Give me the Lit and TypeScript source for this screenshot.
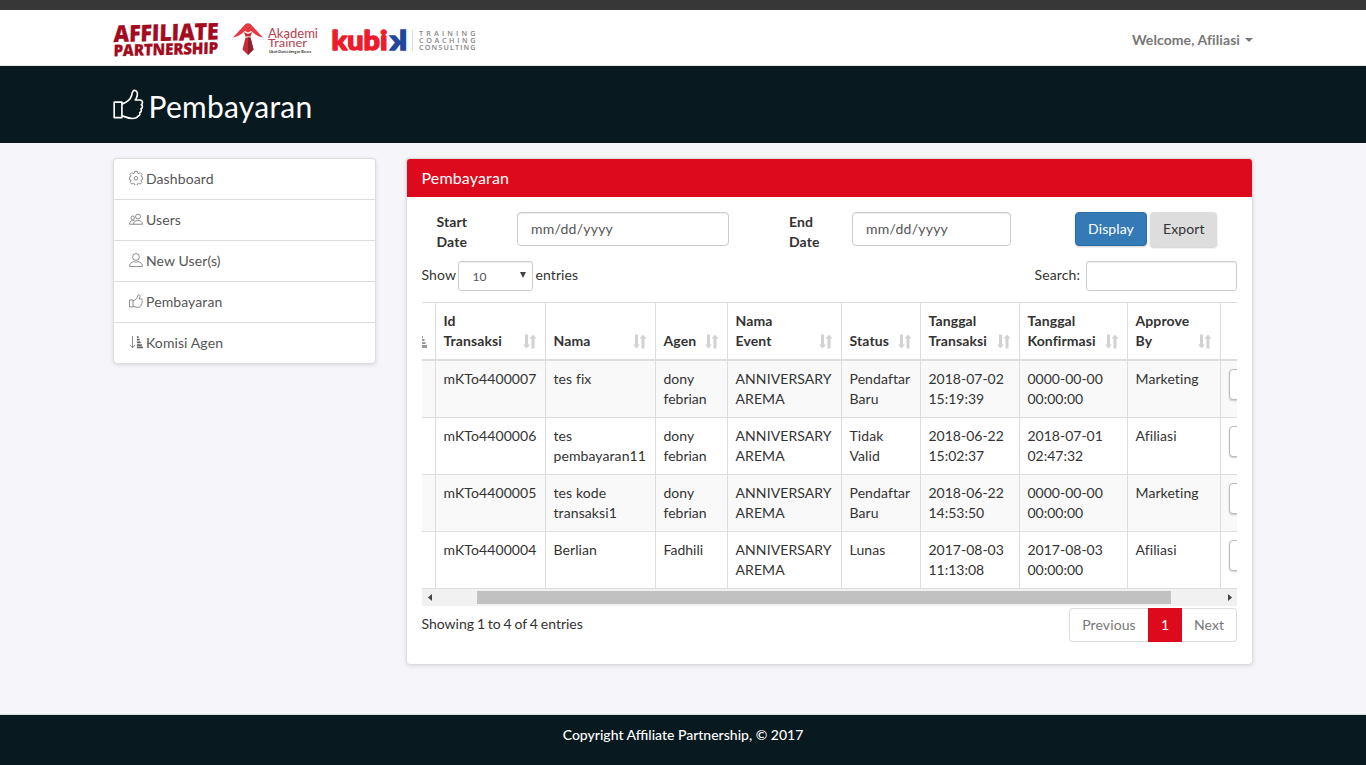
import { LitElement, html, css, svg } from "lit";
import { customElement } from "lit/decorators.js";

const thumb = svg`<path d="M.6 6.800h4v8H.6zM4.600 7.800C7.400 6.800 9 5.600 9.600 3.400 9.900 1.700 10.200.7 11 .7c1.300 0 1.800 1.300 1.500 2.700-.2 1-.6 1.700-1 2.300H14c1.600.2 1.500 1.900.6 2.300.9.600.7 1.900-.2 2.200.5.7.2 1.700-.6 2 .3.900-.1 1.600-.9 1.800-.4.800-1.300 1.200-2.900 1.200-2.200 0-3.600-.800-5.400-1.400" />`;

const gear = svg`<path d="M6.500.6h3l.4 1.900 1.200.5 1.700-1.100 2 2-1.100 1.700.5 1.200 1.500.3v2.600l-1.500.4-.5 1.200 1.100 1.700-2 2-1.700-1.100-1.200.5-.4 1.900h-3l-.4-1.900-1.200-.5-1.700 1.100-2-2 1.100-1.700-.5-1.200L.3 9.700V7.100l1.500-.3.5-1.200-1.100-1.700 2-2L4.900 3l1.200-.5z"/><circle cx="8" cy="8.300" r="2"/>`;

const users = svg`<circle cx="10.300" cy="5.200" r="2.800"/><path d="M5.200 14c0-2.600 1.800-3.600 3.700-4.300.6.500 2.200.5 2.800 0 1.900.7 3.700 1.700 3.700 4.300z"/><circle cx="4.300" cy="6.600" r="2"/><path d="M5.200 14H.600c0-2.300 1-3.600 2.700-4.300.5.400 1.700.4 2.200 0l1 .6"/>`;

const user = svg`<circle cx="8" cy="4.500" r="3.900"/><path d="M.6 15.500c0-3.300 2.200-4.800 4.900-5.700 1.200.9 3.800.9 5 0 2.700.9 4.900 2.400 4.900 5.700z"/>`;

const sortBars = svg`<path d="M4 1v13.500M.8 11.200 4 14.500l2.800-3.300"/><path stroke-width="2" d="M9 2.300h2M9 5.300h3.200M9 8.400h4.400M9 11.500h5.600M9 14h7"/>`;

const MENU = [
  { label: "Dashboard", icon: gear },
  { label: "Users", icon: users },
  { label: "New User(s)", icon: user },
  { label: "Pembayaran", icon: thumb },
  { label: "Komisi Agen", icon: sortBars },
];

const COLUMNS = [
  ["Id", "Transaksi"],
  ["Nama"],
  ["Agen"],
  ["Nama", "Event"],
  ["Status"],
  ["Tanggal", "Transaksi"],
  ["Tanggal", "Konfirmasi"],
  ["Approve", "By"],
];

const ROWS = [
  ["mKTo4400007", "tes fix", "dony febrian", "ANNIVERSARY AREMA", "Pendaftar Baru", "2018-07-02 15:19:39", "0000-00-00 00:00:00", "Marketing"],
  ["mKTo4400006", "tes pembayaran11", "dony febrian", "ANNIVERSARY AREMA", "Tidak Valid", "2018-06-22 15:02:37", "2018-07-01 02:47:32", "Afiliasi"],
  ["mKTo4400005", "tes kode transaksi1", "dony febrian", "ANNIVERSARY AREMA", "Pendaftar Baru", "2018-06-22 14:53:50", "0000-00-00 00:00:00", "Marketing"],
  ["mKTo4400004", "Berlian", "Fadhili", "ANNIVERSARY AREMA", "Lunas", "2017-08-03 11:13:08", "2017-08-03 00:00:00", "Afiliasi"],
];

@customElement("app-root")
export class AppRoot extends LitElement {
  static styles = css`
    :host {
      display: flex;
      flex-direction: column;
      height: 765px;
      overflow: hidden;
      background: #f5f5fa;
      color: #333;
      font: 14px/20px Lato, sans-serif;
    }
    * { box-sizing: border-box; }
    .strip { height: 10px; background: #373737; flex: none; }
    .container { width: 1140px; margin: 0 auto; }
    .nav { height: 56px; background: #fff; border-bottom: 1px solid #dfe6e8; flex: none; }
    .nav-in { display: flex; justify-content: space-between; align-items: center; height: 55px; }
    .logos { display: block; }
    .welcome { color: #777; font-weight: 700; display: flex; align-items: center; gap: 5px; padding-top: 5px; letter-spacing: 0.08px; font-variant-ligatures: common-ligatures; }
    .caret { border: 4px solid transparent; border-top-color: #777; border-bottom: 0; }
    .hero { height: 77px; background: #08191f; flex: none; }
    .hero-in { display: flex; align-items: center; gap: 5px; height: 77px; padding-top: 4px; color: #fff; font-size: 30px; line-height: 33px; letter-spacing: 0.25px; }
    .hero-icon { width: 31px; height: 31px; margin: 0 0 4px -0.5px; fill: none; stroke: #fff; stroke-width: 0.85; stroke-linejoin: round; }
    .content { display: flex; align-items: flex-start; justify-content: space-between; padding-top: 15px; flex: 1; }
    .menu { width: 263px; background: #fff; border: 1px solid #ddd; border-radius: 4px; box-shadow: 0 1px 4px rgba(0,0,0,.12); letter-spacing: 0.1px; }
    .item { display: flex; align-items: center; gap: 3px; height: 41px; padding: 0 15px; color: #555; border-bottom: 1px solid #ddd; }
    .item:last-child { height: 40px; border-bottom: 0; }
    .item svg { width: 14px; height: 14px; margin-bottom: 3px; fill: none; stroke: #666; stroke-width: 0.85; }
    .panel { width: 847px; height: 507px; background: #fff; border: 1px solid #ddd; border-radius: 4px; box-shadow: 0 1px 4px rgba(0,0,0,.12); overflow: hidden; }
    .panel-head { height: 38px; background: #dd0a1e; color: #fff; font-size: 16px; line-height: 38px; padding-left: 14.5px; letter-spacing: 0.15px; }
    .panel-body { padding: 15px 15px 0; }
    .filters { display: grid; grid-template-columns: 80px 212px 60px 63px 159px 64px auto; height: 49px; padding-left: 15px; align-items: start; }
    .lab { font-weight: 700; width: 40px; margin-left: -0.5px; letter-spacing: 0.1px; }
    .end-lab { grid-column: 4; margin-left: 0; }
    .box { border: 1px solid #ccc; border-radius: 4px; background: #fff; box-shadow: inset 0 1px 1px rgba(0,0,0,.075); height: 34px; padding: 6px 13px; color: #555; }
    .date { letter-spacing: 0.25px; }
    .btns { grid-column: 7; display: flex; gap: 3px; }
    .btn { height: 34px; padding: 6px 12px; border: 1px solid #2e6da4; border-radius: 4px; background: #337ab7; color: #fff; box-shadow: 0 1px 2px rgba(0,0,0,.2); width: 72px; text-align: center; white-space: nowrap; letter-spacing: 0.1px; }
    .btn.grey { border-color: #ddd; background: #ddd; color: #333; width: 67px; height: 35px; }
    .tools { display: flex; justify-content: space-between; height: 41px; }
    .tool { display: flex; gap: 3px; line-height: 28px; letter-spacing: 0.1px; }
    .show { width: 33px; margin-left: -0.5px; }
    .tool.search { gap: 6px; }
    .select { width: 75px; height: 30px; border-radius: 3px; padding: 0 6px 0 14px; font-size: 12px; line-height: 29px; display: flex; justify-content: space-between; align-items: center; }
    .tri { width: 6px; height: 6px; fill: #444; margin-bottom: 2px; }
    .searchbox { width: 151px; height: 30px; border-radius: 3px; }
    .scroller { width: 815px; overflow: hidden; }
    table { table-layout: fixed; width: 815px; border-collapse: separate; border-spacing: 0; }
    th, td { padding: 8px 8px 8px 7.5px; text-align: left; border-right: 1px solid #ddd; border-bottom: 1px solid #ddd; vertical-align: top; }
    th { border-top: 1px solid #ddd; border-bottom-width: 2px; vertical-align: bottom; font-weight: 700; height: 59px; letter-spacing: 0.1px; }
    td { height: 57px; }
    td:nth-child(2), td:nth-child(3), td:nth-child(5), td:nth-child(6), td:nth-child(9) { letter-spacing: 0.09px; padding-right: 6px; font-variant-ligatures: common-ligatures; }
    .c0 { width: 14px; } .c1, .c2 { width: 110px; } .c3 { width: 72px; } .c4 { width: 114px; }
    .c5 { width: 79px; } .c6 { width: 99px; } .c7 { width: 108px; } .c8 { width: 93px; } .c9 { width: 16px; }
    tbody tr:nth-child(odd) td { background: #f9f9f9; }
    .th { display: flex; align-items: flex-end; justify-content: space-between; white-space: nowrap; }
    .sort { width: 15px; height: 15px; margin-bottom: 2px; flex: none; fill: #d2d2d2; }
    .edge { padding: 0 0 10px; overflow: hidden; }
    .edge svg { display: block; width: 6px; height: 14px; fill: #999; }
    .last { border-right: 0; overflow: hidden; padding-left: 8px; }
    .stub { width: 40px; height: 31px; border: 1px solid #bbb; border-radius: 4px; background: #fff; box-shadow: 0 1px 2px rgba(0,0,0,.2); }
    .bar { display: grid; grid-template-columns: 17px 1fr 17px; align-items: center; height: 17px; background: #f1f1f1; }
    .bar svg { width: 17px; height: 17px; fill: #444; }
    .thumb { height: 13px; background: #c1c1c1; margin: 0 49px 0 38px; }
    .foot { display: flex; justify-content: space-between; padding-top: 2px; }
    .info { padding-top: 6px; margin-left: -0.5px; word-spacing: -0.75px; }
    .pages { display: flex; height: 34px; color: #777; line-height: 32px; text-align: center; letter-spacing: 0.1px; }
    .pg { border: 1px solid #ddd; }
    .prev { width: 79px; border-right: 0; border-radius: 4px 0 0 4px; }
    .cur { width: 34px; background: #dd0a1e; border-color: #dd0a1e; color: #fff; }
    .next { width: 55px; border-left: 0; border-radius: 0 4px 4px 0; }
    .footer { height: 51px; background: #08191f; border-top: 1px solid #ddd; color: #fff; text-align: center; padding-top: 10px; font-weight: 500; flex: none; }
  `;

  private logos() {
    return html`<svg class="logos" width="370" height="55" viewBox="0 0 370 55">
      <g fill="#a30b20" stroke="#a30b20" stroke-width=".3" font-family="Open Sans" font-weight="800">
        <g transform="rotate(-1.500 50 30)">
          <text transform="translate(.5 30.800) skewX(-3)" font-size="23" textLength="105" lengthAdjust="spacingAndGlyphs">AFFILIATE</text>
          <text transform="translate(0 45) skewX(-3)" font-size="16" textLength="104.500" lengthAdjust="spacingAndGlyphs">PARTNERSHIP</text>
        </g>
      </g>
      <path fill="#e43b43" d="M120 27.500 132 14.500q3-2.500 6 0L150 27.500c-4-.5-8-3-12-6.500l-3 1.500-3-1.500c-4 3.500-8 6-12 6.500z"/>
      <path fill="#c42c38" d="m131 22 4 2 4-2-1.500 4.500h-5zM132.500 27.500h5l3 12-5.500 5.500-5.500-5.500z"/>
      <path fill="#8f2029" d="M135 27.500h2.500l3 12-5.500 5.500z"/>
      <g font-family="Lato" fill="#b5414c">
        <text x="155" y="28" font-size="13.500" textLength="50" lengthAdjust="spacingAndGlyphs">Akademi</text>
        <text x="155" y="37" font-size="12" textLength="39" lengthAdjust="spacingAndGlyphs">Trainer</text>
        <text x="156" y="43" font-size="4.500" fill="#333" font-weight="700" textLength="42" lengthAdjust="spacingAndGlyphs">Ubah Dunia dengan Bicara</text>
      </g>
      <g font-family="Lato" font-weight="900" font-size="27">
        <text x="218.500" y="39.700" fill="#ec1c2d" stroke="#ec1c2d" stroke-width="1.400" stroke-linejoin="round" textLength="56" lengthAdjust="spacingAndGlyphs">kubi</text>
        <g transform="translate(294 0) scale(-1 1)"><text x="0" y="39.700" fill="#1f479b" stroke="#1f479b" stroke-width="1.400" textLength="17" lengthAdjust="spacingAndGlyphs">k</text></g>
      </g>
      <path stroke="#ddd" d="M299.500 20v21"/>
      <g font-family="Open Sans" font-weight="600" font-size="7.200" fill="#858585">
        <text x="306" y="26" textLength="56.500">TRAINING</text>
        <text x="306" y="33" textLength="56.500">COACHING</text>
        <text x="306" y="40" textLength="56.500">CONSULTING</text>
      </g>
    </svg>`;
  }

  render() {
    return html`
      <div class="strip"></div>
      <header class="nav"><div class="container nav-in">${this.logos()}
        <div class="welcome">Welcome, Afiliasi<span class="caret"></span></div></div></header>
      <div class="hero"><div class="container hero-in">
        <svg class="hero-icon" viewBox="0 0 16 16">${thumb}</svg><span>Pembayaran</span></div></div>
      <main class="container content">
        <nav class="menu">${MENU.map((m) => html`<div class="item"><svg viewBox="0 0 16 16">${m.icon}</svg><span>${m.label}</span></div>`)}</nav>
        <section class="panel">
          <div class="panel-head">Pembayaran</div>
          <div class="panel-body">
            <div class="filters">
              <div class="lab">Start Date</div><div class="box date">mm/dd/yyyy</div>
              <div class="lab end-lab">End Date</div><div class="box date">mm/dd/yyyy</div>
              <div class="btns"><div class="btn">Display</div><div class="btn grey">Export</div></div>
            </div>
            <div class="tools">
              <div class="tool"><span class="show">Show</span><div class="box select"><span>10</span><svg class="tri" viewBox="0 0 6 6"><path d="M0 0h6L3 6z"/></svg></div><span>entries</span></div>
              <div class="tool search"><span>Search:</span><div class="box searchbox"></div></div>
            </div>
            <div class="scroller">
              <table>
                <colgroup>${[0, 1, 2, 3, 4, 5, 6, 7, 8, 9].map((i) => html`<col class="c${i}" />`)}</colgroup>
                <thead><tr>
                  <th class="edge"><svg viewBox="0 0 6 14"><path d="M0 1h1v2H0zM0 4h2.500v2H0zM0 7h3.500v2H0zM0 10h5v3H0z"/></svg></th>
                  ${COLUMNS.map((c) => html`<th><div class="th"><span>${c.map((t, i) => (i ? html`<br />${t}` : t))}</span>
                    <svg class="sort" viewBox="0 0 15 15"><path d="M3 .5h3v10h2L4.500 14.500 1 10.500h2zM9.500 14.500h3v-10h2L11 .5 7.500 4.500h2z"/></svg></div></th>`)}
                  <th class="last"></th>
                </tr></thead>
                <tbody>${ROWS.map((r) => html`<tr><td></td>${r.map((c) => html`<td>${c}</td>`)}<td class="last"><div class="stub"></div></td></tr>`)}</tbody>
              </table>
              <div class="bar"><svg viewBox="0 0 17 17"><path d="M10 5v7L6 8.500z"/></svg><div class="thumb"></div><svg viewBox="0 0 17 17"><path d="M8 5v7l4-3.500z"/></svg></div>
            </div>
            <div class="foot">
              <div class="info">Showing 1 to 4 of 4 entries</div>
              <div class="pages"><div class="pg prev">Previous</div><div class="pg cur">1</div><div class="pg next">Next</div></div>
            </div>
          </div>
        </section>
      </main>
      <footer class="footer">Copyright Affiliate Partnership, © 2017</footer>
    `;
  }
}
